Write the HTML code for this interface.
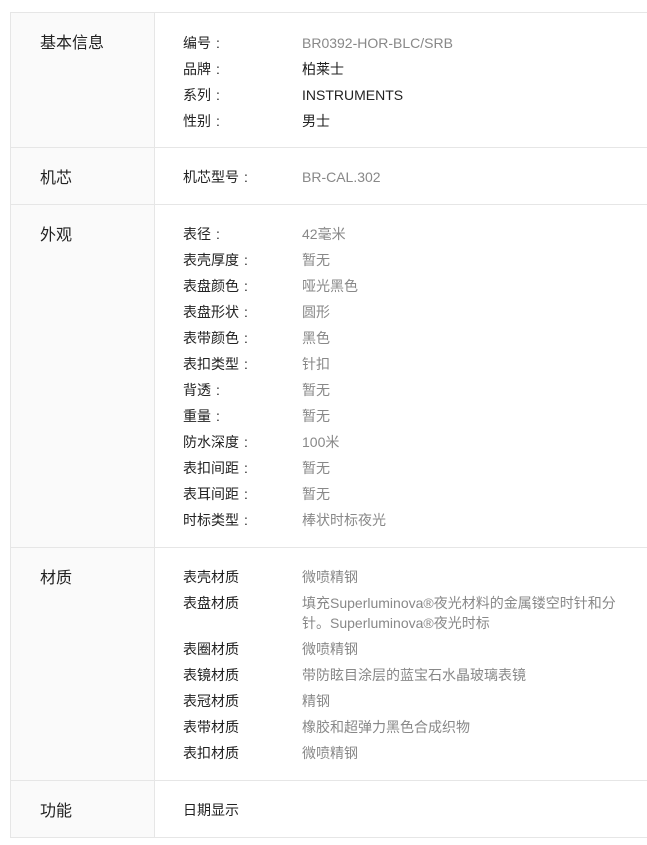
<!DOCTYPE html>
<html><head><meta charset="utf-8"><style>
html,body{margin:0;padding:0;background:#fff;width:647px;height:845px;overflow:hidden;}
body{font-family:"Liberation Sans","Noto Sans CJK SC",sans-serif;color:#222;}
.t{position:absolute;left:10px;top:12px;width:660px;border-top:1px solid #e6e6e6;border-left:1px solid #e6e6e6;}
.r{display:flex;border-bottom:1px solid #e6e6e6;box-sizing:border-box;}
.h{width:144px;background:#fafafa;border-right:1px solid #e6e6e6;padding-left:29px;box-sizing:border-box;font-size:16px;line-height:20px;padding-top:21px;}
.h.s{padding-top:21px;}
.c{flex:1;padding-left:28px;padding-top:20px;box-sizing:border-box;font-size:14px;}
.i{display:flex;line-height:20px;margin-bottom:6px;}
.l{width:119px;flex:none;}
.l b{font-weight:normal;display:inline-block;width:14px;text-align:center;}
.v{width:330px;color:#888;}
.k{color:#222;}
</style></head><body>
<div class="t">
<div class="r" style="height:135px"><div class="h">基本信息</div><div class="c">
<div class="i"><span class="l">编号<b>:</b></span><span class="v">BR0392-HOR-BLC/SRB</span></div>
<div class="i"><span class="l">品牌<b>:</b></span><span class="v k">柏莱士</span></div>
<div class="i"><span class="l">系列<b>:</b></span><span class="v k">INSTRUMENTS</span></div>
<div class="i"><span class="l">性别<b>:</b></span><span class="v k">男士</span></div>
</div></div>
<div class="r" style="height:57px"><div class="h s">机芯</div><div class="c" style="padding-top:19px">
<div class="i"><span class="l">机芯型号<b>:</b></span><span class="v">BR-CAL.302</span></div>
</div></div>
<div class="r" style="height:343px"><div class="h s">外观</div><div class="c" style="padding-top:19px">
<div class="i"><span class="l">表径<b>:</b></span><span class="v">42毫米</span></div>
<div class="i"><span class="l">表壳厚度<b>:</b></span><span class="v">暂无</span></div>
<div class="i"><span class="l">表盘颜色<b>:</b></span><span class="v">哑光黑色</span></div>
<div class="i"><span class="l">表盘形状<b>:</b></span><span class="v">圆形</span></div>
<div class="i"><span class="l">表带颜色<b>:</b></span><span class="v">黑色</span></div>
<div class="i"><span class="l">表扣类型<b>:</b></span><span class="v">针扣</span></div>
<div class="i"><span class="l">背透<b>:</b></span><span class="v">暂无</span></div>
<div class="i"><span class="l">重量<b>:</b></span><span class="v">暂无</span></div>
<div class="i"><span class="l">防水深度<b>:</b></span><span class="v">100米</span></div>
<div class="i"><span class="l">表扣间距<b>:</b></span><span class="v">暂无</span></div>
<div class="i"><span class="l">表耳间距<b>:</b></span><span class="v">暂无</span></div>
<div class="i"><span class="l">时标类型<b>:</b></span><span class="v">棒状时标夜光</span></div>
</div></div>
<div class="r" style="height:233px"><div class="h s">材质</div><div class="c" style="padding-top:19px">
<div class="i"><span class="l">表壳材质</span><span class="v">微喷精钢</span></div>
<div class="i"><span class="l">表盘材质</span><span class="v">填充Superluminova®夜光材料的金属镂空时针和分针。Superluminova®夜光时标</span></div>
<div class="i"><span class="l">表圈材质</span><span class="v">微喷精钢</span></div>
<div class="i"><span class="l">表镜材质</span><span class="v">带防眩目涂层的蓝宝石水晶玻璃表镜</span></div>
<div class="i"><span class="l">表冠材质</span><span class="v">精钢</span></div>
<div class="i"><span class="l">表带材质</span><span class="v">橡胶和超弹力黑色合成织物</span></div>
<div class="i"><span class="l">表扣材质</span><span class="v">微喷精钢</span></div>
</div></div>
<div class="r" style="height:57px"><div class="h s">功能</div><div class="c" style="padding-top:19px">
<div class="i"><span class="l">日期显示</span></div>
</div></div>
</div>
</body></html>
